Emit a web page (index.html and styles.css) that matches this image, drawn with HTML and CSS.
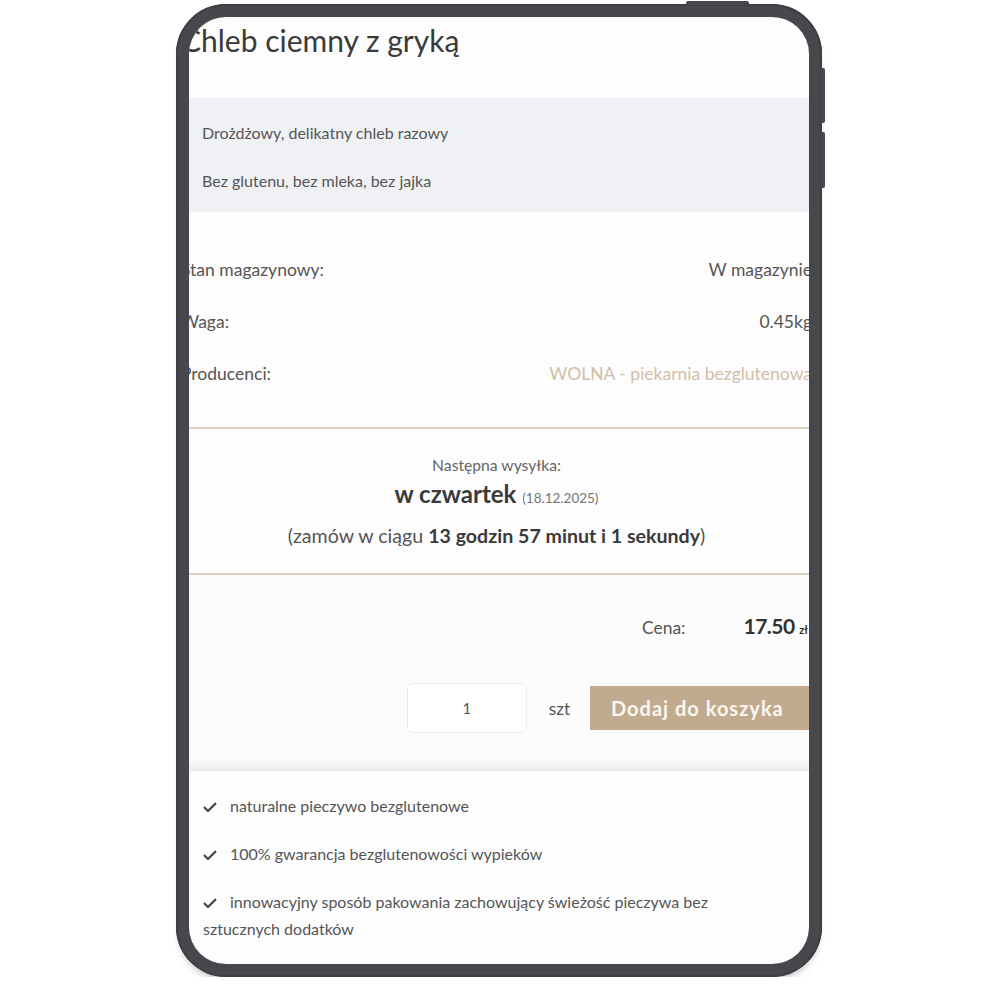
FILE: index.html
```html
<!DOCTYPE html>
<html lang="pl">
<head>
  <meta charset="UTF-8" />
  <meta name="viewport" content="width=device-width, initial-scale=1" />
  <title>Chleb ciemny z gryką – WOLNA</title>
  <link rel="stylesheet" href="styles.css">
</head>
<body>
  <div class="tablet">
    <span class="hw-btn hw-top"></span>
    <span class="hw-btn hw-side hw-side-1"></span>
    <span class="hw-btn hw-side hw-side-2"></span>

    <div class="screen">
      <div class="page">
        <h1 class="product-title">Chleb ciemny z gryką</h1>

        <div class="short-desc">
          <p>Drożdżowy, delikatny chleb razowy</p>
          <p>Bez glutenu, bez mleka, bez jajka</p>
        </div>

        <dl class="specs">
          <div class="spec-row"><dt>Stan magazynowy:</dt><dd>W magazynie</dd></div>
          <div class="spec-row"><dt>Waga:</dt><dd>0.45kg</dd></div>
          <div class="spec-row"><dt>Producenci:</dt><dd class="producer">WOLNA - piekarnia bezglutenowa</dd></div>
        </dl>

        <div class="shipping">
          <div class="ship-label">Następna wysyłka:</div>
          <div class="ship-day">w czwartek <span class="ship-date">(18.12.2025)</span></div>
          <div class="ship-countdown">(zamów w ciągu <b>13 godzin 57 minut i 1 sekundy</b>)</div>
        </div>

        <div class="buy">
          <div class="price-row">
            <span class="price-label">Cena:</span>
            <span class="price">17.50 <small>zł</small></span>
          </div>
          <div class="cart-row">
            <input class="qty" type="text" value="1">
            <span class="unit">szt</span>
            <button class="add-to-cart" type="button">Dodaj do koszyka</button>
          </div>
        </div>

        <div class="perks-sep"></div>

        <ul class="perks">
          <li><svg class="check" viewBox="0 0 14 10"><polyline points="1,5 5,9 13,1" /></svg>naturalne pieczywo bezglutenowe</li>
          <li><svg class="check" viewBox="0 0 14 10"><polyline points="1,5 5,9 13,1" /></svg>100% gwarancja bezglutenowości wypieków</li>
          <li><svg class="check" viewBox="0 0 14 10"><polyline points="1,5 5,9 13,1" /></svg>innowacyjny sposób pakowania zachowujący świeżość pieczywa bez sztucznych dodatków</li>
        </ul>
      </div>
    </div>
  </div>
</body>
</html>
```

FILE: styles.css
```css
* { box-sizing: border-box; }
body { margin: 0; background: #fff; font-family: 'Lato', 'Noto Sans', sans-serif; color: #555; }

/* device frame */
.tablet { position: relative; width: 646px; height: 973px; margin: 4px 0 0 176px; padding: 13px; background: #47484d; border-radius: 50px; box-shadow: inset 0 0 0 2px #3e3f44, 0 7px 8px -5px rgba(0,0,0,0.3); }
.hw-btn { position: absolute; background: #47484d; }
.hw-top { top: -3px; left: 510px; width: 63px; height: 4px; border-radius: 2px 2px 0 0; }
.hw-side { right: -3px; width: 4px; border-radius: 0 2px 2px 0; }
.hw-side-1 { top: 64px; height: 55px; }
.hw-side-2 { top: 128px; height: 56px; }
.screen { width: 100%; height: 100%; background: #fdfdfd; border-radius: 37px; overflow: hidden; }
.page { margin: 0 -3px 0 -8px; }

/* product */
.product-title { margin: 0; padding-top: 5px; font-size: 30px; line-height: 36px; font-weight: 400; color: #3a3a3a; }
.short-desc { margin-top: 40px; padding: 23px 21px 19px; background: #f0f1f5; font-size: 16px; line-height: 24px; color: #555; }
.short-desc p { margin: 0; }
.short-desc p + p { margin-top: 24px; }

.specs { margin: 46px 0 0; display: flex; flex-direction: column; gap: 28px; font-size: 17.5px; line-height: 24px; }
.spec-row { display: flex; justify-content: space-between; }
.spec-row dt, .spec-row dd { margin: 0; }
.spec-row dd { color: #555; }
.spec-row dd.producer { color: #d2bea8; }

.shipping { margin-top: 41px; padding: 26px 0 24px; border-top: 2px solid #ddd1c4; border-bottom: 2px solid #ddd1c4; text-align: center; }
.ship-label { font-size: 15.7px; line-height: 20px; color: #666; }
.ship-day { margin-top: 4px; font-size: 24px; line-height: 30px; font-weight: 700; color: #3a3a3a; }
.ship-date { font-size: 13.5px; font-weight: 400; color: #777; }
.ship-countdown { margin-top: 10px; font-size: 19.6px; line-height: 26px; color: #555; }
.ship-countdown b { color: #3a3a3a; }

.buy { padding-top: 36px; background: #fcfcfc; }
.price-row { display: flex; justify-content: flex-end; align-items: baseline; gap: 58px; padding-right: 4px; line-height: 30px; }
.price-label { font-size: 17.5px; color: #555; }
.price { font-size: 21px; font-weight: 700; color: #333; letter-spacing: -0.5px; }
.price small { font-size: 11px; letter-spacing: 0; }
.cart-row { display: flex; justify-content: flex-end; align-items: center; margin-top: 38px; padding-bottom: 25px; }
.qty { width: 120px; height: 50px; border: 1px solid #ececf0; border-radius: 5px; background: #fff; text-align: center; font: 15px 'Lato', sans-serif; color: #555; }
.unit { margin: 0 20px 0 22px; font-size: 17px; color: #555; }
.add-to-cart { width: 222px; height: 44px; padding: 0 0 0 21px; border: none; background: #c2aa8e; color: #faf6f0; text-align: left; font: 700 20px 'Lato', sans-serif; letter-spacing: 1px; }

.perks-sep { height: 13px; background: linear-gradient(#fbfbfb, #ebebec); }
.perks { margin: 0; padding: 21px 40px 40px 22px; list-style: none; font-size: 16px; line-height: 27px; color: #555; }
.perks li + li { margin-top: 21px; }
.check { width: 14px; height: 10px; margin-right: 13px; fill: none; stroke: #444; stroke-width: 2.2; }
```
